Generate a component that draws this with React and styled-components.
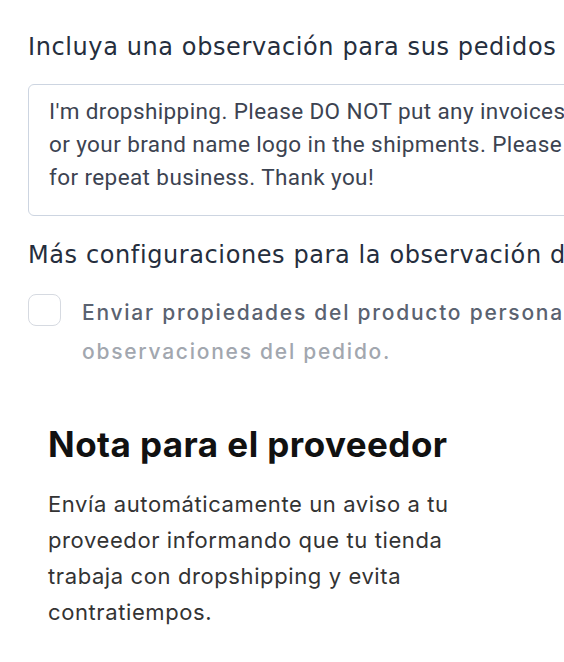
import React from 'react';
import styled, { createGlobalStyle } from 'styled-components';

const GlobalStyle = createGlobalStyle`
  html, body {
    margin: 0;
    padding: 0;
    background: #ffffff;
  }
  body {
    overflow: hidden;
  }
`;

const Page = styled.main`
  width: 564px;
  height: 662px;
  overflow: hidden;
  padding-top: 33px;
  box-sizing: border-box;
`;

const Settings = styled.section`
  padding-left: 28px;
  width: 760px;
  box-sizing: border-box;
`;

const FieldLabel = styled.h3`
  margin: 0;
  font-family: 'DejaVu Sans', sans-serif;
  font-size: 24px;
  font-weight: 400;
  line-height: 28px;
  letter-spacing: 0.6px;
  color: #252e3d;
  white-space: nowrap;
`;

const NoteBox = styled.div`
  margin-top: 23px;
  width: 620px;
  height: 132px;
  box-sizing: border-box;
  border: 1px solid #cdd5e1;
  border-radius: 6px;
  padding: 10px 20px 0;
  font-family: Roboto, 'Liberation Sans', sans-serif;
  font-size: 22.5px;
  line-height: 33px;
  letter-spacing: 0.4px;
  color: #3c4351;
  white-space: nowrap;
`;

const MoreLabel = styled(FieldLabel)`
  margin-top: 25px;
`;

const CheckRow = styled.label`
  margin-top: 25px;
  display: flex;
  align-items: flex-start;
  gap: 22px;
`;

const CheckBox = styled.span`
  flex: none;
  width: 33px;
  height: 32px;
  border: 1.5px solid #d6dae1;
  border-radius: 8px;
  box-sizing: border-box;
  background: #fff;
`;

const CheckText = styled.div`
  font-family: Inter, 'Noto Sans', sans-serif;
  font-size: 21px;
  font-weight: 500;
  line-height: 39px;
  margin-top: -1px;
  margin-left: -1px;
  letter-spacing: 1.75px;
  white-space: nowrap;
`;

const CheckLine = styled.div`
  color: ${p => (p.$faded ? '#a2a7af' : '#5a6270')};
`;

const Supplier = styled.section`
  margin-top: 52px;
  padding-left: 48px;
`;

const SupplierTitle = styled.h2`
  margin: 0;
  font-family: Inter, 'Noto Sans', sans-serif;
  font-size: 35px;
  font-weight: 700;
  line-height: 42px;
  letter-spacing: 0.45px;
  color: #111111;
`;

const SupplierText = styled.p`
  margin: 21px 0 0;
  max-width: 430px;
  font-family: Inter, 'Noto Sans', sans-serif;
  font-size: 22px;
  line-height: 36px;
  letter-spacing: 0.6px;
  color: #333333;
`;

export default function App() {
  return (
    <>
      <GlobalStyle />
      <Page>
        <Settings>
          <FieldLabel>Incluya una observación para sus pedidos en AliExpress</FieldLabel>
          <NoteBox>
            I'm dropshipping. Please DO NOT put any invoices, price tags
            <br />
            or your brand name logo in the shipments. Please ship fast
            <br />
            for repeat business. Thank you!
          </NoteBox>
          <MoreLabel>Más configuraciones para la observación del pedido</MoreLabel>
          <CheckRow>
            <CheckBox />
            <CheckText>
              <CheckLine>Enviar propiedades del producto personalizado en las</CheckLine>
              <CheckLine $faded>observaciones del pedido.</CheckLine>
            </CheckText>
          </CheckRow>
        </Settings>
        <Supplier>
          <SupplierTitle>Nota para el proveedor</SupplierTitle>
          <SupplierText>
            Envía automáticamente un aviso a tu proveedor informando que tu tienda trabaja con
            dropshipping y evita contratiempos.
          </SupplierText>
        </Supplier>
      </Page>
    </>
  );
}
